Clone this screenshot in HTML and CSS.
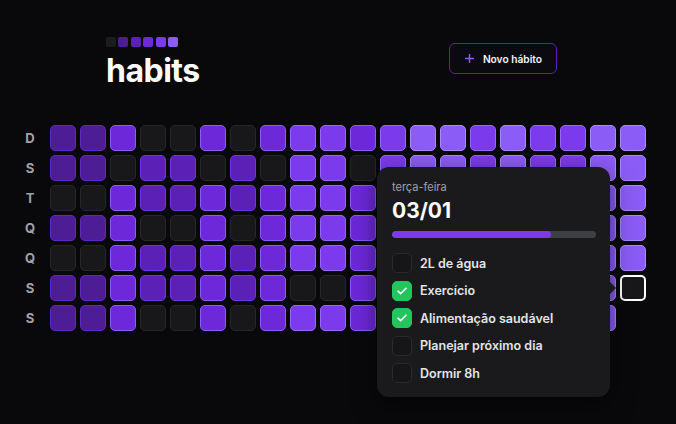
FILE: index.html
```html
<!DOCTYPE html>
<html lang="pt-BR">
<head>
<meta charset="utf-8">
<title>habits</title>
<link rel="stylesheet" href="styles.css">
</head>
<body>
<header class="header">
  <div class="brand">
    <div class="brand-squares">
      <span class="sq l0"></span><span class="sq l1"></span><span class="sq l2"></span><span class="sq l3"></span><span class="sq l4"></span><span class="sq l5"></span>
    </div>
    <h1 class="brand-title">habits</h1>
  </div>
  <button class="new-btn" type="button">
    <svg class="plus" width="9" height="9" viewBox="0 0 10 10"><path d="M5 0.5v9M0.5 5h9" stroke="#8b5cf6" stroke-width="1.6" stroke-linecap="round" fill="none"/></svg>
    <span>Novo hábito</span>
  </button>
</header>

<main class="board">
  <div class="row"><span class="label">D</span>
    <span class="c l1"></span><span class="c l1"></span><span class="c l3"></span><span class="c l0"></span><span class="c l0"></span><span class="c l3"></span><span class="c l0"></span><span class="c l3"></span><span class="c l4"></span><span class="c l4"></span><span class="c l3"></span><span class="c l4"></span><span class="c l5"></span><span class="c l5"></span><span class="c l4"></span><span class="c l5"></span><span class="c l4"></span><span class="c l4"></span><span class="c l5"></span><span class="c l5"></span>
  </div>
  <div class="row"><span class="label">S</span>
    <span class="c l1"></span><span class="c l1"></span><span class="c l0"></span><span class="c l2"></span><span class="c l2"></span><span class="c l0"></span><span class="c l2"></span><span class="c l0"></span><span class="c l4"></span><span class="c l4"></span><span class="c l0"></span><span class="c l4"></span><span class="c l5"></span><span class="c l5"></span><span class="c l4"></span><span class="c l5"></span><span class="c l4"></span><span class="c l4"></span><span class="c l5"></span><span class="c l5"></span>
  </div>
  <div class="row"><span class="label">T</span>
    <span class="c l0"></span><span class="c l0"></span><span class="c l3"></span><span class="c l2"></span><span class="c l2"></span><span class="c l3"></span><span class="c l2"></span><span class="c l3"></span><span class="c l4"></span><span class="c l4"></span><span class="c l3"></span><span class="c l4"></span><span class="c l5"></span><span class="c l5"></span><span class="c l4"></span><span class="c l5"></span><span class="c l4"></span><span class="c l4"></span><span class="c l5"></span><span class="c l5"></span>
  </div>
  <div class="row"><span class="label">Q</span>
    <span class="c l1"></span><span class="c l1"></span><span class="c l3"></span><span class="c l0"></span><span class="c l0"></span><span class="c l3"></span><span class="c l0"></span><span class="c l3"></span><span class="c l4"></span><span class="c l4"></span><span class="c l3"></span><span class="c l4"></span><span class="c l5"></span><span class="c l5"></span><span class="c l4"></span><span class="c l5"></span><span class="c l4"></span><span class="c l4"></span><span class="c l5"></span><span class="c l5"></span>
  </div>
  <div class="row"><span class="label">Q</span>
    <span class="c l0"></span><span class="c l0"></span><span class="c l3"></span><span class="c l2"></span><span class="c l2"></span><span class="c l3"></span><span class="c l2"></span><span class="c l3"></span><span class="c l4"></span><span class="c l4"></span><span class="c l3"></span><span class="c l4"></span><span class="c l5"></span><span class="c l5"></span><span class="c l4"></span><span class="c l5"></span><span class="c l4"></span><span class="c l4"></span><span class="c l5"></span><span class="c l5"></span>
  </div>
  <div class="row"><span class="label">S</span>
    <span class="c l1"></span><span class="c l1"></span><span class="c l3"></span><span class="c l2"></span><span class="c l2"></span><span class="c l3"></span><span class="c l2"></span><span class="c l3"></span><span class="c l0"></span><span class="c l0"></span><span class="c l3"></span><span class="c l4"></span><span class="c l5"></span><span class="c l5"></span><span class="c l4"></span><span class="c l5"></span><span class="c l4"></span><span class="c l4"></span><span class="c l5"></span><span class="c selected"></span>
  </div>
  <div class="row"><span class="label">S</span>
    <span class="c l1"></span><span class="c l1"></span><span class="c l3"></span><span class="c l0"></span><span class="c l0"></span><span class="c l3"></span><span class="c l0"></span><span class="c l3"></span><span class="c l4"></span><span class="c l4"></span><span class="c l3"></span><span class="c l4"></span><span class="c l5"></span><span class="c l5"></span><span class="c l4"></span><span class="c l5"></span><span class="c l4"></span><span class="c l4"></span><span class="c l5"></span><span class="c future"></span>
  </div>

  <section class="popover">
    <span class="popover-arrow"></span>
    <p class="pop-day">terça-feira</p>
    <p class="pop-date">03/01</p>
    <div class="progress"><div class="progress-fill" style="width: 78%"></div></div>
    <ul class="checklist">
      <li class="item"><span class="box"></span><span class="item-text">2L de água</span></li>
      <li class="item"><span class="box checked"><svg width="10" height="8" viewBox="0 0 10 8"><path d="M1 4.2l2.6 2.5L9 1.2" stroke="#fff" stroke-width="1.6" fill="none" stroke-linecap="round" stroke-linejoin="round"/></svg></span><span class="item-text">Exercício</span></li>
      <li class="item"><span class="box checked"><svg width="10" height="8" viewBox="0 0 10 8"><path d="M1 4.2l2.6 2.5L9 1.2" stroke="#fff" stroke-width="1.6" fill="none" stroke-linecap="round" stroke-linejoin="round"/></svg></span><span class="item-text">Alimentação saudável</span></li>
      <li class="item"><span class="box"></span><span class="item-text">Planejar próximo dia</span></li>
      <li class="item"><span class="box"></span><span class="item-text">Dormir 8h</span></li>
    </ul>
  </section>
</main>
</body>
</html>
```
FILE: styles.css
```css
* { box-sizing: border-box; }

html, body {
  margin: 0;
  padding: 0;
}

body {
  width: 676px;
  height: 424px;
  overflow: hidden;
  background: #09090b;
  font-family: Inter, "Noto Sans", sans-serif;
  color: #fafafa;
}

.header {
  display: flex;
  justify-content: space-between;
  align-items: flex-start;
  padding: 37px 119px 0 106px;
  height: 125px;
}

.brand-squares {
  display: flex;
  gap: 2.4px;
}

.sq {
  width: 10px;
  height: 10px;
  border-radius: 2px;
}

.sq.l0 { background: #1c1c1f; }
.sq.l1 { background: #4c1d95; }
.sq.l2 { background: #5b21b6; }
.sq.l3 { background: #6d28d9; }
.sq.l4 { background: #7c3aed; }
.sq.l5 { background: #8b5cf6; }

.brand-title {
  margin: 8px 0 0;
  font-size: 32px;
  line-height: 32px;
  font-weight: 700;
  letter-spacing: -0.5px;
  color: #ffffff;
}

.new-btn {
  margin-top: 6px;
  height: 31px;
  display: flex;
  align-items: center;
  gap: 9px;
  padding: 0 14px 0 15px;
  background: #0b0a10;
  border: 1px solid #5b21b6;
  border-radius: 6px;
  color: #f4f4f5;
  font-family: Inter, sans-serif;
  font-size: 10.2px;
  font-weight: 600;
}

.board {
  position: relative;
  margin-left: 20px;
  display: flex;
  flex-direction: column;
  gap: 4px;
}

.row {
  display: flex;
  align-items: center;
  gap: 4px;
}

.label {
  width: 20px;
  margin-right: 6px;
  text-align: center;
  font-size: 13px;
  font-weight: 700;
  color: #a1a1aa;
}

.c {
  width: 26px;
  height: 26px;
  border-radius: 5px;
  border: 1px solid transparent;
}

.c.l0 { background: #18181b; border-color: #27272a; }
.c.l1 { background: #4c1d95; border-color: #6227c4; }
.c.l2 { background: #5b21b6; border-color: #7434e4; }
.c.l3 { background: #6d28d9; border-color: #8b5cf6; }
.c.l4 { background: #7c3aed; border-color: #9568f7; }
.c.l5 { background: #8b5cf6; border-color: #a78bfa; }
.c.selected { background: #18181b; border: 2px solid #ffffff; }
.c.future { visibility: hidden; }

.popover {
  position: absolute;
  left: 357px;
  top: 42px;
  width: 233px;
  padding: 13px 14px 14px 15px;
  background: #1a1a1d;
  border-radius: 12px;
  box-shadow: 0 8px 24px rgba(0, 0, 0, 0.5);
}

.popover-arrow {
  position: absolute;
  right: -6px;
  top: 115px;
  width: 0;
  height: 0;
  border-top: 6px solid transparent;
  border-bottom: 6px solid transparent;
  border-left: 6px solid #1a1a1d;
}

.pop-day {
  margin: 0;
  font-size: 11px;
  line-height: 14px;
  color: #a1a1aa;
}

.pop-date {
  margin: 4px 0 0;
  font-size: 21px;
  line-height: 26px;
  font-weight: 700;
  color: #ffffff;
}

.progress {
  margin-top: 7px;
  height: 7px;
  border-radius: 4px;
  background: #3f3f46;
  overflow: hidden;
}

.progress-fill {
  height: 100%;
  border-radius: 4px;
  background: #7c3aed;
}

.checklist {
  list-style: none;
  margin: 15px 0 0;
  padding: 0;
  display: flex;
  flex-direction: column;
  gap: 7.5px;
}

.item {
  display: flex;
  align-items: center;
  height: 20px;
}

.box {
  width: 20px;
  height: 20px;
  border-radius: 5px;
  border: 1.5px solid #2a2a2e;
  background: #161618;
  display: flex;
  align-items: center;
  justify-content: center;
  flex-shrink: 0;
}

.box.checked {
  background: #22c55e;
  border-color: #22c55e;
}

.item-text {
  margin-left: 8px;
  font-size: 12.5px;
  font-weight: 600;
  color: #e4e4e7;
}
```
